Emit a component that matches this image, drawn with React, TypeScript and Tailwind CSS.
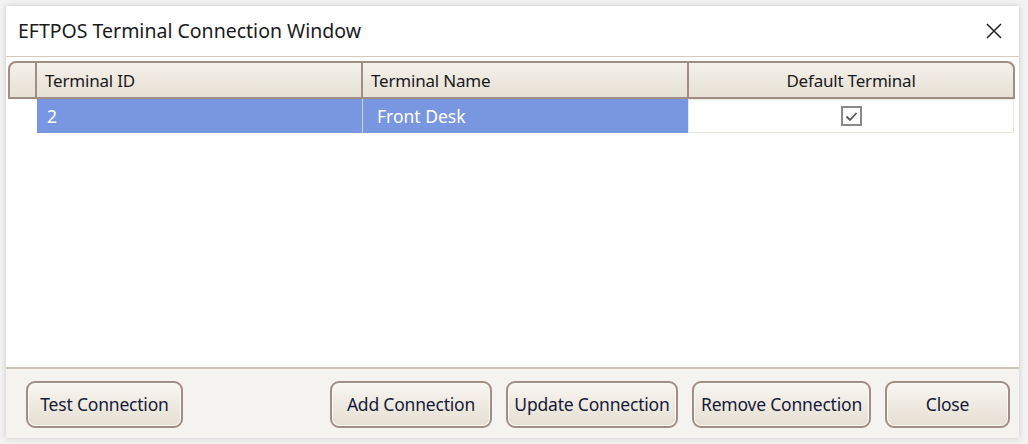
import React from "react";

const font = { fontFamily: '"Noto Sans", "Open Sans", "Liberation Sans", sans-serif' };

function Btn({ label, w, ml }: { label: string; w: string; ml?: string }) {
  return (
    <button
      className={`${w} ${ml ?? ""} h-[47px] rounded-[9px] border-2 border-[#a08e84] bg-gradient-to-b from-[#f8f6f1] to-[#e6dfd3] text-[17.5px] text-[#161a38] tracking-[-0.2px] flex items-center justify-center shadow-[inset_0_0_0_1px_#fbf9f5]`}
    >
      {label}
    </button>
  );
}

export default function App() {
  return (
    <div className="w-[1028px] h-[444px] bg-[#f3f3f3] pt-[6px] pl-[6px]" style={font}>
      <div className="w-[1013px] h-[432px] bg-white flex flex-col shadow-[0_0_6px_rgba(0,0,0,0.18)]">
        {/* Title bar */}
        <div className="h-[51px] flex items-center justify-between pl-[12px] pr-[16px] border-b border-[#d3c9bf]">
          <span className="text-[19.5px] text-[#1a1a1a] tracking-[0px]">EFTPOS Terminal Connection Window</span>
          <svg width="18" height="18" viewBox="0 0 18 18" className="mb-[1px]">
            <path d="M2 2 L16 16 M16 2 L2 16" stroke="#222" strokeWidth="1.5" />
          </svg>
        </div>
        {/* Grid area */}
        <div className="flex-1 bg-white pt-[4px] pl-[2px] pr-[4px]">
          <div className="flex h-[38px] rounded-t-[8px] border-2 border-[#a08e84] bg-gradient-to-b from-[#f4f1ea] to-[#e7e1d5] text-[17px] text-[#1a1a1a] tracking-[-0.2px] overflow-hidden">
            <div className="w-[27px] border-r-2 border-[#a08e84]" />
            <div className="w-[326px] border-r-2 border-[#a08e84] flex items-center pl-[8px] pt-[1px]">Terminal ID</div>
            <div className="w-[326px] border-r-2 border-[#a08e84] flex items-center pl-[8px] pt-[1px]">Terminal Name</div>
            <div className="flex-1 flex items-center justify-center pt-[1px]">Default Terminal</div>
          </div>
          <div className="flex h-[34px] pl-[29px] text-[17.5px] text-white">
            <div className="w-[326px] bg-[#7997e0] flex items-center pl-[10px] border-r border-[#c9d5f5]">2</div>
            <div className="w-[325px] bg-[#7997e0] flex items-center pl-[14px]">Front Desk</div>
            <div className="w-[326px] bg-white border border-[#e3ead9] flex items-center justify-center">
              <div className="w-[21px] h-[20px] border-2 border-[#8a8a8a] flex items-center justify-center">
                <svg width="13" height="11" viewBox="0 0 13 11">
                  <path d="M1.5 5.5 L5 9 L11.5 2" stroke="#555" strokeWidth="1.8" fill="none" />
                </svg>
              </div>
            </div>
          </div>
        </div>
        {/* Button panel */}
        <div className="h-[71px] border-t-2 border-[#cbc2b8] bg-[#f5f3ef] flex items-start pt-[12px] pl-[20px]">
          <Btn label="Test Connection" w="w-[157px]" />
          <Btn label="Add Connection" w="w-[162px]" ml="ml-[147px]" />
          <Btn label="Update Connection" w="w-[172px]" ml="ml-[14px]" />
          <Btn label="Remove Connection" w="w-[179px]" ml="ml-[14px]" />
          <Btn label="Close" w="w-[125px]" ml="ml-[14px]" />
        </div>
      </div>
    </div>
  );
}
